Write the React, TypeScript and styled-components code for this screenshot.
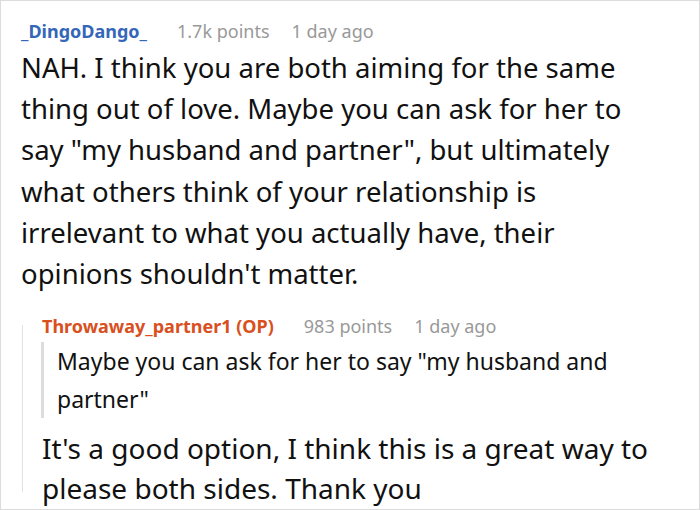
import React from 'react';
import styled, { createGlobalStyle } from 'styled-components';

const Global = createGlobalStyle`
  html, body {
    margin: 0;
    padding: 0;
    background: #fff;
  }
  body {
    font-family: 'Noto Sans', 'Open Sans', sans-serif;
    color: #111;
  }
`;

const Frame = styled.div`
  box-sizing: border-box;
  width: 700px;
  height: 510px;
  border: 1px solid #dcdcdc;
  padding: 18px 36px 0 20px;
  overflow: hidden;
`;

const Header = styled.div`
  display: flex;
  align-items: baseline;
  gap: 22px;
  font-size: 18px;
  line-height: 24px;
  white-space: nowrap;
`;

const Author = styled.span<{ $op?: boolean }>`
  font-weight: 700;
  margin-right: 8px;
  color: ${(p) => (p.$op ? '#d9501e' : '#3467b8')};
`;

const Meta = styled.span`
  color: #999;
`;

const Body = styled.div`
  font-size: 27.5px;
  line-height: 41.2px;
  margin-top: 4px;
`;

const Reply = styled.div`
  position: relative;
  margin-top: 20px;
  padding-left: 21px;

  &::before {
    content: '';
    position: absolute;
    left: 1px;
    top: 11px;
    bottom: 16px;
    width: 1px;
    background: #e2e2e2;
  }
`;

const Quote = styled.blockquote`
  margin: 4px 0 0 -1px;
  border-left: 3px solid #dcdcdc;
  padding-left: 13px;
  font-size: 23px;
  line-height: 38px;
`;

const ReplyBody = styled.div`
  font-size: 28px;
  line-height: 40px;
  margin-top: 10px;
`;

export default function App() {
  return (
    <>
      <Global />
      <Frame>
        <Header>
          <Author>_DingoDango_</Author>
          <Meta>1.7k points</Meta>
          <Meta>1 day ago</Meta>
        </Header>
        <Body>
          NAH. I think you are both aiming for the same thing out of love. Maybe you can ask
          for her to say "my husband and partner", but ultimately what others think of your
          relationship is irrelevant to what you actually have, their opinions shouldn't matter.
        </Body>
        <Reply>
          <Header>
            <Author $op>Throwaway_partner1 (OP)</Author>
            <Meta>983 points</Meta>
            <Meta>1 day ago</Meta>
          </Header>
          <Quote>Maybe you can ask for her to say "my husband and partner"</Quote>
          <ReplyBody>
            It's a good option, I think this is a great way to please both sides. Thank you
          </ReplyBody>
        </Reply>
      </Frame>
    </>
  );
}
